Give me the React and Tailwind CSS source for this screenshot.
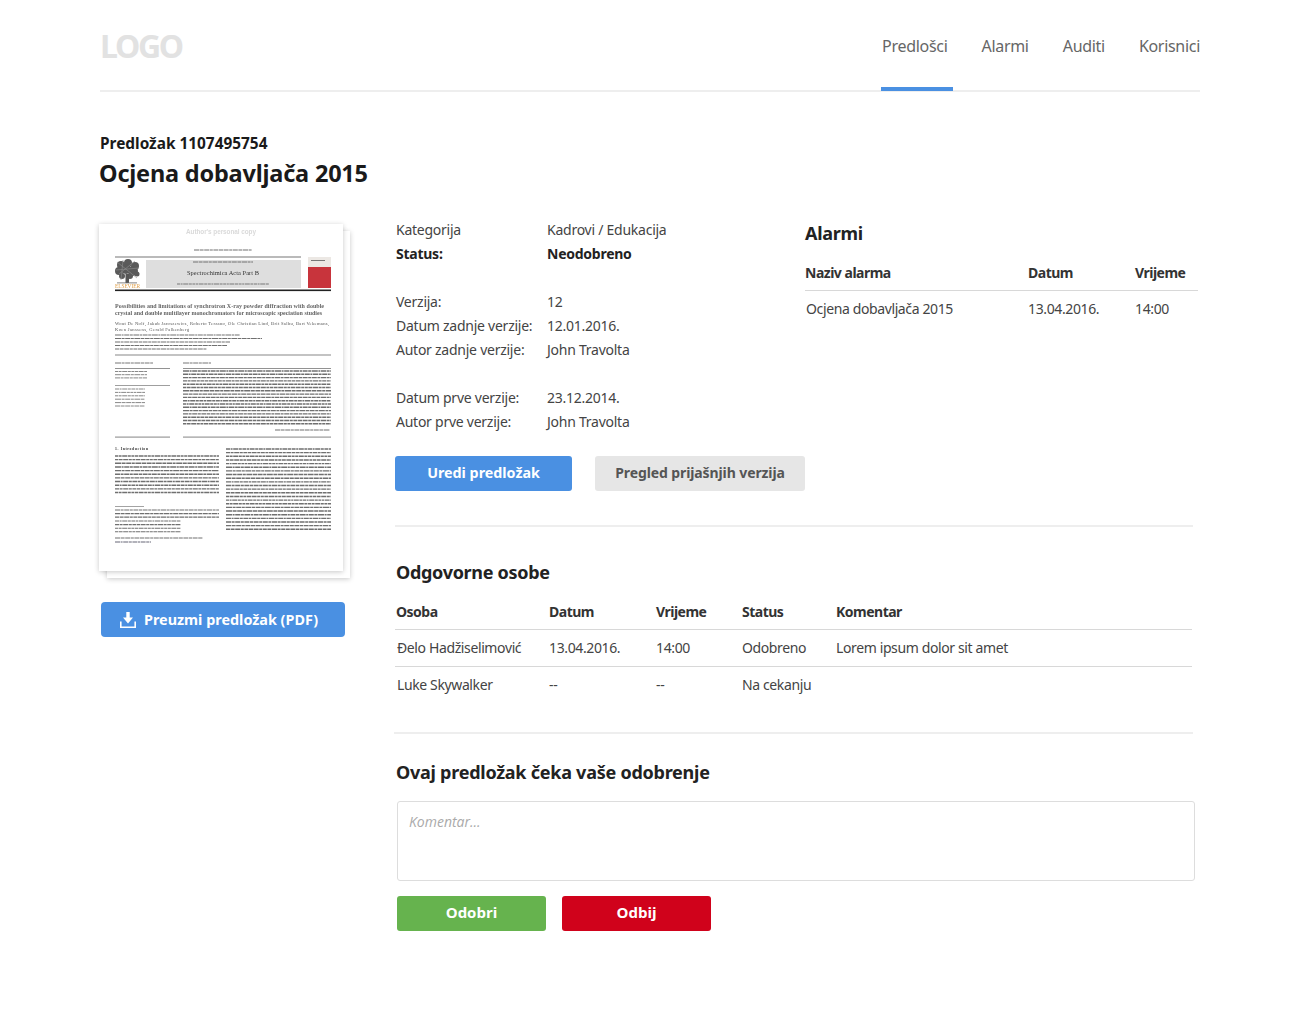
const navItems = ['Predlošci', 'Alarmi', 'Auditi', 'Korisnici'];

const details = [
  ['Kategorija', 'Kadrovi / Edukacija'],
  ['Status:', 'Neodobreno', true],
  null,
  ['Verzija:', '12'],
  ['Datum zadnje verzije:', '12.01.2016.'],
  ['Autor zadnje verzije:', 'John Travolta'],
  null,
  ['Datum prve verzije:', '23.12.2014.'],
  ['Autor prve verzije:', 'John Travolta'],
];

const people = [
  ['Đelo Hadžiselimović', '13.04.2016.', '14:00', 'Odobreno', 'Lorem ipsum dolor sit amet'],
  ['Luke Skywalker', '--', '--', 'Na cekanju', ''],
];

// tiny body copy of the scanned page, one dashed line per text row
function TextLines({ x, width, from, to, step = 4, weight = 1.4, color = '#707070' }) {
  const rows = [];
  for (let y = from; y <= to; y += step) {
    rows.push(
      <line
        key={y}
        x1={x}
        x2={x + width}
        y1={y}
        y2={y}
        stroke={color}
        strokeWidth={weight}
        strokeDasharray={`${3 + (Math.round(y) % 4)} 0.6 ${2 + (Math.round(y) % 3)} 0.6 5 0.6 3 0.6`}
      />
    );
  }
  return rows;
}

function Tree() {
  const blobs = [
    [22, 41, 4], [29, 39, 4], [36, 42, 4], [20, 47, 4], [27, 45, 5], [34, 47, 5], [38, 50, 2.5], [23, 52, 3], [31, 52, 3],
  ];
  return (
    <g>
      {blobs.map(([cx, cy, r]) => (
        <circle key={`${cx}-${cy}`} cx={cx} cy={cy} r={r} fill="#5a5a5a" />
      ))}
      <path d="M18 38 L38 54 M24 36 L22 56 M36 37 L20 50 M17 46 L40 44" stroke="#8e8e8e" strokeWidth="0.6" />
      <rect x="26.5" y="50" width="3.5" height="9" fill="#555" />
      <rect x="18" y="58.5" width="20" height="0.8" fill="#666" />
    </g>
  );
}

function DocumentPage() {
  return (
    <svg viewBox="0 0 244 347" className="block h-[347px] w-[244px] tracking-normal blur-[0.4px]">
      <rect width="244" height="347" fill="#fff" />
      <text x="122" y="9.5" textAnchor="middle" fontSize="6.4" fontWeight="700" fill="#dadada" fontFamily="Liberation Sans, sans-serif" textLength="70">Author's personal copy</text>
      <TextLines x={95} width={58} from={26} to={26} weight={1.2} />

      <rect x="16" y="32.5" width="186" height="1" fill="#777" />
      <rect x="47" y="36" width="155" height="28" fill="#dedede" />
      <Tree />
      <text x="16" y="64" fontSize="5.4" fill="#e0a04a" fontFamily="Liberation Serif, serif" textLength="25">ELSEVIER</text>
      <TextLines x={94} width={60} from={38} to={38} weight={1.2} />
      <text x="124" y="51" textAnchor="middle" fontSize="6.4" fill="#333" fontFamily="Liberation Serif, serif" textLength="72">Spectrochimica Acta Part B</text>
      <TextLines x={78} width={92} from={60} to={60} weight={1.1} color="#777" />
      <rect x="209" y="33" width="23" height="31" fill="#c8343c" />
      <rect x="209" y="33" width="23" height="10" fill="#ece8e4" />
      <rect x="212" y="36" width="14" height="1" fill="#777" />
      <rect x="16" y="65.5" width="216" height="1.6" fill="#222" />

      <text x="16" y="84" fontSize="6" fontWeight="700" fill="#666" fontFamily="Liberation Serif, serif" textLength="209">Possibilities and limitations of synchrotron X-ray powder diffraction with double</text>
      <text x="16" y="91" fontSize="6" fontWeight="700" fill="#666" fontFamily="Liberation Serif, serif" textLength="207">crystal and double multilayer monochromators for microscopic speciation studies</text>
      <text x="16" y="100.5" fontSize="4.6" fill="#555" fontFamily="Liberation Serif, serif" textLength="214">Wout De Nolf, Jakub Jaroszewicz, Roberto Terzano, Ole Christian Lind, Brit Salbu, Bart Vekemans,</text>
      <text x="16" y="106.5" fontSize="4.6" fill="#555" fontFamily="Liberation Serif, serif" textLength="74">Koen Janssens, Gerald Falkenberg</text>
      <TextLines x={16} width={125} from={111} to={111} weight={1.1} />
      <TextLines x={16} width={147} from={114.5} to={114.5} weight={1.1} />
      <TextLines x={16} width={115} from={118} to={118} weight={1.1} />
      <TextLines x={16} width={112} from={121.5} to={121.5} weight={1.1} />
      <TextLines x={16} width={92} from={125} to={125} weight={1.1} />
      <rect x="16" y="130.5" width="216" height="1" fill="#888" />

      <TextLines x={16} width={38} from={139} to={139} weight={1} color="#777" />
      <TextLines x={84} width={28} from={139} to={139} weight={1} color="#777" />
      <rect x="16" y="144" width="55" height="0.8" fill="#777" />
      <rect x="84" y="144" width="148" height="0.8" fill="#777" />
      <TextLines x={16} width={32} from={147.5} to={157} step={3.2} weight={1} color="#888" />
      <rect x="16" y="161" width="55" height="0.8" fill="#888" />
      <TextLines x={16} width={30} from={165} to={183} step={3.4} weight={1} color="#888" />
      <TextLines x={84} width={148} from={147} to={202} step={3.3} />
      <TextLines x={176} width={55} from={206} to={206} weight={1.2} />
      <rect x="16" y="212.5" width="55" height="1.2" fill="#999" />
      <rect x="84" y="212.5" width="148" height="1.2" fill="#999" />

      <text x="16" y="225.5" fontSize="3.8" fontWeight="700" fill="#333" fontFamily="Liberation Serif, serif" textLength="33">1. Introduction</text>
      <TextLines x={16} width={104} from={232} to={272} step={3.65} />
      <TextLines x={127} width={105} from={225} to={308} step={3.65} />
      <rect x="16" y="282" width="29" height="0.6" fill="#666" />
      <TextLines x={16} width={104} from={286} to={294} step={3.6} weight={1.2} />
      <TextLines x={16} width={66} from={297} to={308} step={3.6} weight={1.1} />
      <TextLines x={16} width={88} from={314} to={314} weight={1.1} />
      <TextLines x={16} width={36} from={318} to={318} weight={1.1} color="#667" />
    </svg>
  );
}

function DownloadIcon() {
  return (
    <svg viewBox="0 0 16 16" className="h-4 w-4" fill="white">
      <rect x="6.3" y="0" width="3.4" height="6" />
      <path d="M3 5.5h10L8 11.5z" />
      <path d="M0.8 9.5v5.7h14.4V9.5" fill="none" stroke="white" strokeWidth="1.6" />
    </svg>
  );
}

function Th({ children, className = '' }) {
  return <th className={`text-left text-[14px] font-bold tracking-[-0.5px] text-[#333] ${className}`}>{children}</th>;
}

export default function App() {
  return (
    <div className="min-h-[1024px] bg-white font-['Noto_Sans',sans-serif] text-[14px] tracking-[-0.25px] text-[#444]">
      <div className="mx-auto w-[1100px]">
        <header className="flex h-[92px] items-start justify-between border-b-2 border-[#eeeeee]">
          <div className="pt-[26px] text-[32px] leading-[40px] font-bold tracking-[-2.3px] text-[#e2e2e2]">LOGO</div>
          <nav className="flex gap-[34px] text-[16px] tracking-[-0.3px] text-[#666]">
            {navItems.map((item, i) => (
              <a key={item} href="#" className="relative h-[90px] pt-[33px] leading-[26px]">
                {item}
                {i === 0 && <span className="absolute top-[87px] -right-[6px] -left-px h-1 bg-[#4a90e2]" />}
              </a>
            ))}
          </nav>
        </header>

        <div className="pt-[41px] text-[#1a1a1a]">
          <div className="text-[15.4px] leading-[22px] font-bold tracking-normal">Predložak 1107495754</div>
          <h1 className="-ml-px pt-[2px] text-[23.5px] leading-[33px] font-bold tracking-[-0.2px]">Ocjena dobavljača 2015</h1>
        </div>

        <div className="flex pt-[34px]">
          <aside className="w-[295px] shrink-0">
            <div className="relative -ml-px h-[354px] w-[251px]">
              <div className="absolute top-[7px] left-[8px] h-[347px] w-[243px] bg-white shadow-[0_1px_5px_rgba(0,0,0,0.22)]" />
              <div className="absolute top-0 left-0 bg-white shadow-[0_1px_5px_rgba(0,0,0,0.22)]">
                <DocumentPage />
              </div>
            </div>
            <button className="mt-6 ml-px flex h-[35px] w-[244px] items-center justify-center gap-2 rounded-[4px] bg-[#4a90e2] pr-2 text-[14.4px] font-bold tracking-normal text-white">
              <DownloadIcon />
              Preuzmi predložak (PDF)
            </button>
          </aside>

          <main className="w-[805px]">
            <div className="flex">
              <div className="w-[410px] shrink-0">
                <div className="-mt-[7px] pl-px">
                  {details.map((row, i) =>
                    row ? (
                      <div key={i} className={`flex h-6 items-center ${row[2] ? 'font-bold text-[#222]' : ''}`}>
                        <span className="w-[151px]">{row[0]}</span>
                        <span>{row[1]}</span>
                      </div>
                    ) : (
                      <div key={i} className="h-6" />
                    )
                  )}
                </div>
                <div className="mt-[23px] flex gap-[23px]">
                  <button className="h-[35px] w-[177px] rounded-[3px] bg-[#4a90e2] pb-[2px] text-[14.3px] font-bold tracking-normal text-white">Uredi predložak</button>
                  <button className="h-[35px] w-[210px] rounded-[3px] bg-[#e6e6e6] pb-[2px] text-[14px] font-bold tracking-[-0.1px] text-[#555]">Pregled prijašnjih verzija</button>
                </div>
              </div>
              <section className="w-[393px]">
                <h2 className="-mt-1 text-[18px] leading-[26px] font-bold tracking-[-0.3px] text-[#222]">Alarmi</h2>
                <table className="mt-[10px] w-full border-collapse">
                  <thead>
                    <tr className="h-[34px] border-b border-[#d8d8d8]">
                      <Th className="w-[223px]">Naziv alarma</Th>
                      <Th className="w-[107px]">Datum</Th>
                      <Th>Vrijeme</Th>
                    </tr>
                  </thead>
                  <tbody className="tracking-[-0.38px]">
                    <tr className="h-[37px]">
                      <td className="pl-px">Ocjena dobavljača 2015</td>
                      <td>13.04.2016.</td>
                      <td>14:00</td>
                    </tr>
                  </tbody>
                </table>
              </section>
            </div>

            <div className="mt-[34px] h-0.5 w-[798px] bg-[#eeeeee]" />

            <h2 className="mt-[31px] ml-px text-[18px] leading-[28px] font-bold tracking-[-0.3px] text-[#222]">Odgovorne osobe</h2>
            <table className="mt-2 w-[797px] border-collapse">
              <thead>
                <tr className="h-[35px] border-b border-[#d8d8d8]">
                  <Th className="w-[153px] pl-px">Osoba</Th>
                  <Th className="w-[107px] pl-px">Datum</Th>
                  <Th className="w-[86px] pl-px">Vrijeme</Th>
                  <Th className="w-[94px] pl-px">Status</Th>
                  <Th className="pl-px">Komentar</Th>
                </tr>
              </thead>
              <tbody className="tracking-[-0.38px]">
                {people.map((p, i) => (
                  <tr key={p[0]} className={`h-[37px] ${i === 0 ? 'border-b border-[#d8d8d8]' : ''}`}>
                    <td className="pl-[2px]">{p[0]}</td>
                    <td className="pl-px">{p[1]}</td>
                    <td className="pl-px">{p[2]}</td>
                    <td className="pl-px">{p[3]}</td>
                    <td className="pl-px">{p[4]}</td>
                  </tr>
                ))}
              </tbody>
            </table>

            <div className="mt-[29px] -ml-px h-0.5 w-[799px] bg-[#eeeeee]" />

            <h2 className="mt-6 ml-px text-[18px] leading-[28px] font-bold tracking-[-0.25px] text-[#222]">Ovaj predložak čeka vaše odobrenje</h2>
            <div className="mt-[15px] ml-[2px] w-[798px]">
              <textarea
                placeholder="Komentar..."
                className="block h-[80px] w-full resize-none rounded-[3px] border border-[#dddddd] px-[11px] py-[9px] font-['Open_Sans',sans-serif] text-[14px] tracking-normal italic outline-none placeholder:text-[#aaaaaa]"
              />
              <div className="mt-[15px] flex gap-4">
                <button className="h-[35px] w-[149px] rounded-[3px] bg-[#66b34e] pb-[2px] font-['Open_Sans',sans-serif] text-[15px] font-bold tracking-normal text-white">Odobri</button>
                <button className="h-[35px] w-[149px] rounded-[3px] bg-[#d0021b] pb-[2px] font-['Open_Sans',sans-serif] text-[15px] font-bold tracking-normal text-white">Odbij</button>
              </div>
            </div>
          </main>
        </div>
      </div>
    </div>
  );
}
